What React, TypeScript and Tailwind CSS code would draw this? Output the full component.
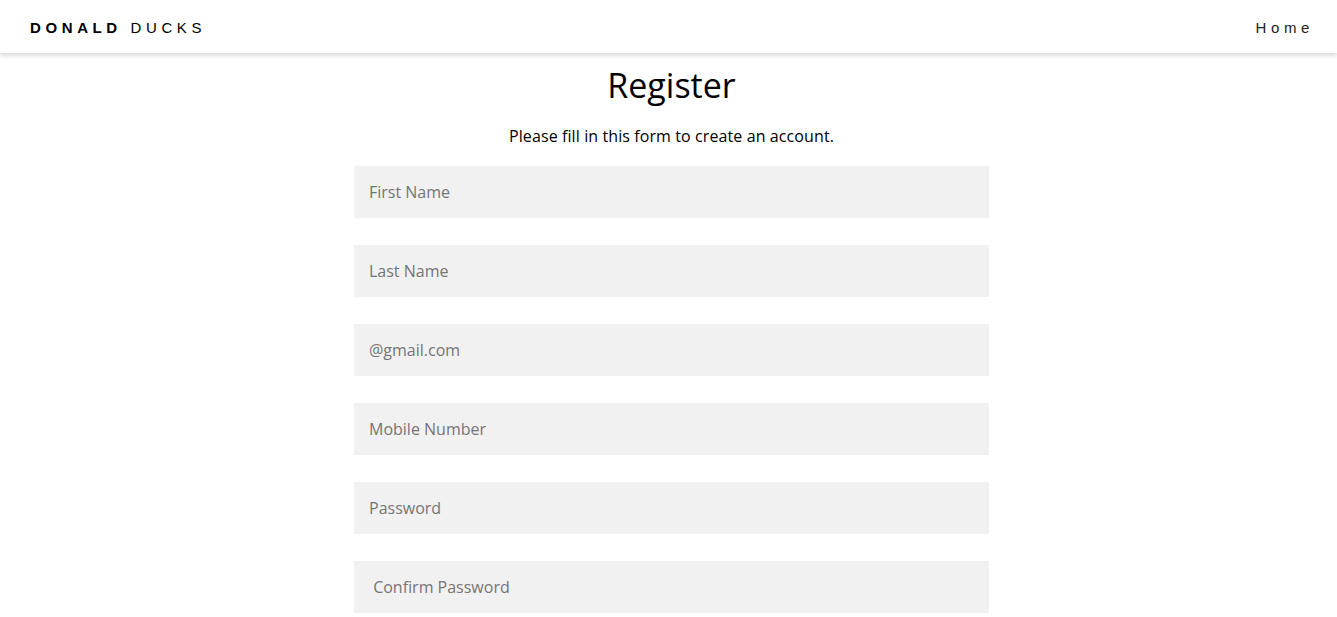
const fields = [
  "First Name",
  "Last Name",
  "@gmail.com",
  "Mobile Number",
  "Password",
  " Confirm Password",
];

function Navbar() {
  return (
    <nav className="flex h-[53px] items-center justify-between bg-white pl-[30px] pr-[23px] pt-[3px] shadow-[0_2px_5px_rgba(0,0,0,0.18)] font-['Liberation_Sans',Arial,sans-serif] text-[15px]">
      <a className="tracking-[4.6px] text-black">
        <b>DONALD</b> DUCKS
      </a>
      <a className="tracking-[4.6px] text-[#222]">Home</a>
    </nav>
  );
}

export default function App() {
  return (
    <div className="min-h-screen bg-white font-['Open_Sans','Noto_Sans',sans-serif]">
      <Navbar />
      <div className="flex justify-center pl-[6px]">
        <form className="flex w-[635px] flex-col items-center">
          <h1 className="mt-[9px] text-[34px] leading-[46px] text-black">Register</h1>
          <p className="mt-[17px] text-[16px] leading-[22px] text-black tracking-[0.1px]">
            Please fill in this form to create an account.
          </p>
          <div className="mt-[19px] flex w-full flex-col gap-[27px]">
            {fields.map((f) => (
              <input
                key={f}
                type={f.includes("Password") ? "password" : "text"}
                placeholder={f}
                className="h-[52px] w-full bg-[#f1f1f1] px-[15px] text-[16px] text-black outline-none placeholder:text-[#757575]"
              />
            ))}
          </div>
        </form>
      </div>
    </div>
  );
}
